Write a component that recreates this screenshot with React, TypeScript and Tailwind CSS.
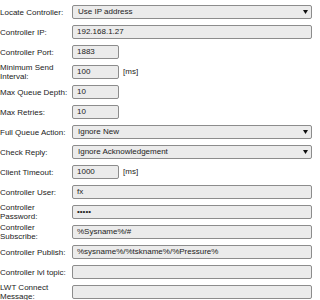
import React from "react";

type Row = {
  label: string;
  kind: "select" | "input" | "short";
  value?: string;
  unit?: string;
};

const rows: Row[] = [
  { label: "Locate Controller:", kind: "select", value: "Use IP address" },
  { label: "Controller IP:", kind: "input", value: "192.168.1.27" },
  { label: "Controller Port:", kind: "short", value: "1883" },
  { label: "Minimum Send Interval:", kind: "short", value: "100", unit: "[ms]" },
  { label: "Max Queue Depth:", kind: "short", value: "10" },
  { label: "Max Retries:", kind: "short", value: "10" },
  { label: "Full Queue Action:", kind: "select", value: "Ignore New" },
  { label: "Check Reply:", kind: "select", value: "Ignore Acknowledgement" },
  { label: "Client Timeout:", kind: "short", value: "1000", unit: "[ms]" },
  { label: "Controller User:", kind: "input", value: "fx" },
  { label: "Controller Password:", kind: "input", value: "•••••" },
  { label: "Controller Subscribe:", kind: "input", value: "%Sysname%/#" },
  { label: "Controller Publish:", kind: "input", value: "%sysname%/%tskname%/%Pressure%" },
  { label: "Controller lvl topic:", kind: "input", value: "" },
  { label: "LWT Connect Message:", kind: "input", value: "" },
];

export default function App() {
  return (
    <div
      className="w-[320px] h-[300px] overflow-hidden bg-white pt-[2px] text-[8px] text-[#222]"
      style={{ fontFamily: '"Liberation Sans", Arial, sans-serif' }}
    >
      {rows.map((row) => (
        <div key={row.label} className="flex items-center h-[20px]">
          {/* Label column */}
          <div className="w-[72px] pr-[2px] leading-[9px] shrink-0">{row.label}</div>

          {row.kind === "select" && (
            <div className="relative flex items-center w-[240px] h-[14px] bg-[#ebebeb] border border-[#8c8c8c] rounded-[2px] pl-[5px] text-[#222]">
              <span className="leading-none">{row.value}</span>
              <svg
                className="absolute right-[3px] top-[4px]"
                width="5"
                height="4"
                viewBox="0 0 5 4"
              >
                <polygon points="0,0 5,0 2.5,4" fill="#111" />
              </svg>
            </div>
          )}

          {row.kind === "input" && (
            <div className="flex items-center w-[240px] h-[14px] bg-[#ebebeb] border border-[#8c8c8c] rounded-[2px] pl-[4px] text-[#222]">
              <span className="leading-none">{row.value}</span>
            </div>
          )}

          {row.kind === "short" && (
            <div className="flex items-center">
              <div className="flex items-center w-[47px] h-[14px] bg-[#ebebeb] border border-[#8c8c8c] rounded-[2px] pl-[4px] text-[#222]">
                <span className="leading-none">{row.value}</span>
              </div>
              {row.unit && <span className="ml-[4px] leading-none">{row.unit}</span>}
            </div>
          )}
        </div>
      ))}
    </div>
  );
}
